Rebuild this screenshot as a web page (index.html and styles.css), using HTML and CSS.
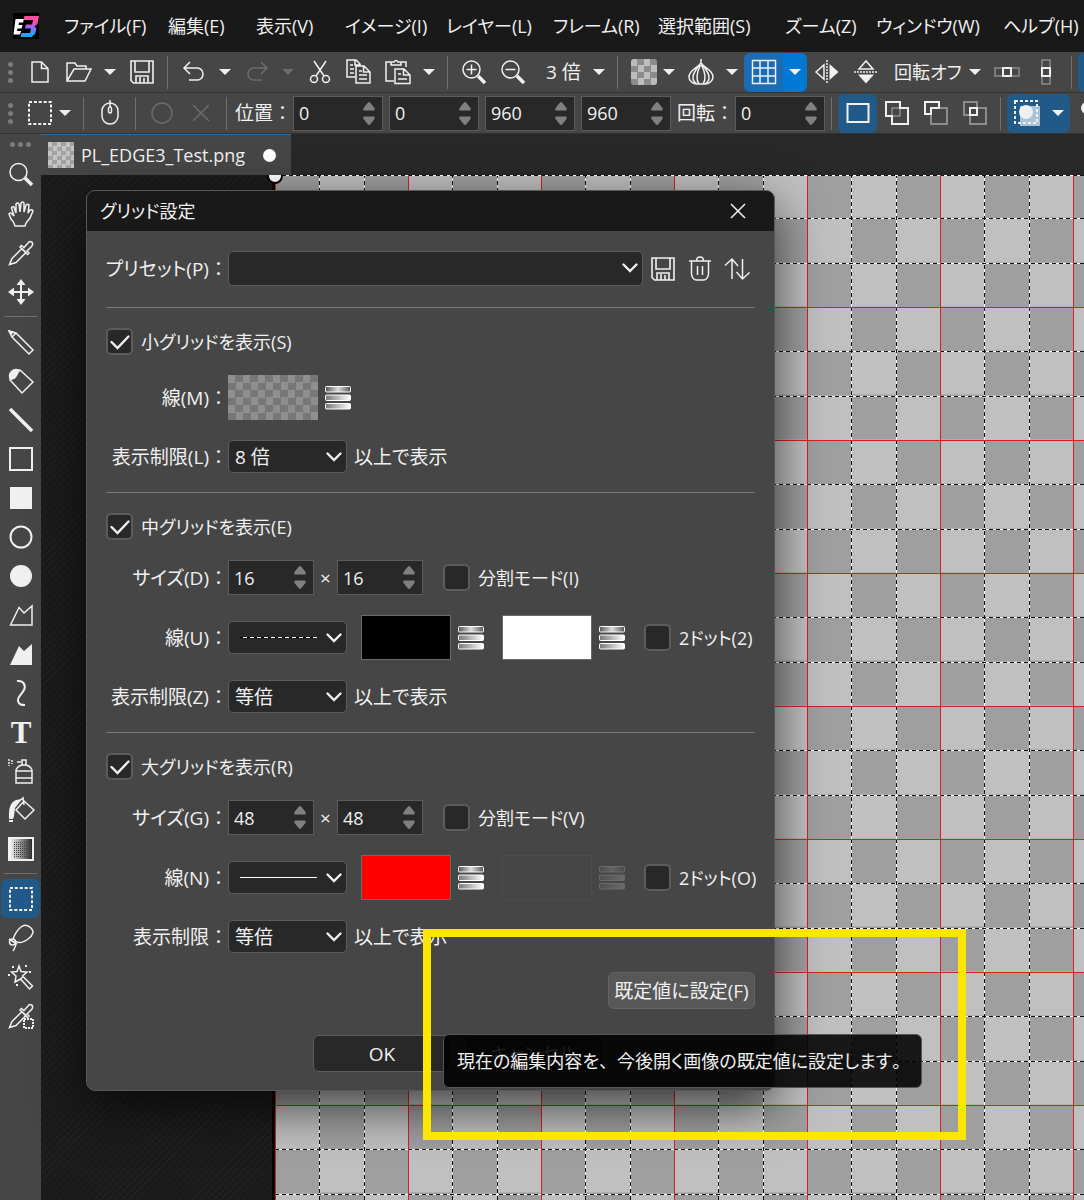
FILE: index.html
```html
<!DOCTYPE html>
<html lang="ja">
<head>
<meta charset="utf-8">
<meta name="viewport" content="width=device-width, initial-scale=1">
<title>PL_EDGE3_Test.png</title>
<link rel="stylesheet" href="styles.css">
</head>
<body>
<svg class="defs" width="0" height="0" aria-hidden="true">
  <defs>
    <linearGradient id="bar" x1="0" x2="1"><stop offset="0" stop-color="#777"/><stop offset="1" stop-color="#fff"/></linearGradient>
    <linearGradient id="barMid" x1="0" x2="1"><stop offset="0" stop-color="#555"/><stop offset=".5" stop-color="#ddd"/><stop offset="1" stop-color="#555"/></linearGradient>
    <linearGradient id="logo3" x1="0" y1="0" x2="0" y2="1"><stop offset=".2" stop-color="#ff4fa0"/><stop offset=".5" stop-color="#b45cf0"/><stop offset=".85" stop-color="#18a8f8"/></linearGradient>
    <linearGradient id="fade" x1="0" x2="1"><stop offset="0" stop-color="#fff"/><stop offset="1" stop-color="#222"/></linearGradient>
    <pattern id="dots" width="2" height="2" patternUnits="userSpaceOnUse"><rect width="1" height="1" fill="#444"/></pattern>
    <symbol id="i-arrow" viewBox="0 0 12 8"><path d="M0 1h12L6 7z" fill="currentColor"/></symbol>
    <symbol id="i-chev" viewBox="0 0 16 10"><path d="M1.500 1.500l6.500 6.500 6.500-6.500" fill="none" stroke="currentColor" stroke-width="2.400" stroke-linecap="round"/></symbol>
    <symbol id="i-up" viewBox="0 0 12 9"><path d="M5 .5Q6-.4 7 .5L11.500 6q.8 2.500-1 2.500H1.500Q-.3 8.500.5 6z" fill="currentColor"/></symbol>
    <symbol id="i-down" viewBox="0 0 12 9"><path d="M5 8.500Q6 9.400 7 8.500L11.500 3q.8-2.500-1-2.500H1.500Q-.3.5.5 3z" fill="currentColor"/></symbol>
    <symbol id="i-save" viewBox="0 0 26 26"><path d="M2 2h22v22H4.500L2 21.500zM6 2v11h14V2M7 24v-7h12v7M11 18v6M15 19v5" fill="none" stroke="currentColor" stroke-width="1.600"/></symbol>
    <symbol id="i-bars" viewBox="0 0 26 24"><g stroke="#fff"><rect x=".5" y=".5" width="25" height="5.500" rx="1" fill="url(#barMid)"/><rect x=".5" y="9" width="25" height="5.500" rx="1" fill="url(#bar)"/><rect x=".5" y="17.500" width="25" height="5.500" rx="1" fill="url(#bar)"/></g></symbol>
    <symbol id="i-marquee" viewBox="0 0 26 26"><path d="M2 2h22v22H2z" fill="none" stroke="currentColor" stroke-width="2" stroke-dasharray="3 1.890"/></symbol>
    <symbol id="i-check" viewBox="0 0 27 27"><path d="M5.500 14l6 6L22.500 8.500" fill="none" stroke="currentColor" stroke-width="2.400" stroke-linecap="round"/></symbol>
    <symbol id="i-drop" viewBox="0 0 26 26"><path d="M1.500 24.500l2.500-6L14 8.500l4 4-10 10zM12 7l7.500 7.500 1.500-1.500-2-2 5-5q1.500-3-.5-4t-3 .5l-4.500 5-2.500-2z" fill="none" stroke="currentColor" stroke-width="1.500"/></symbol>
  </defs>
</svg>

<header class="menubar">
  <svg class="logo" viewBox="0 0 26 26" role="img" aria-label="EDGE3"><rect width="26" height="26" fill="#000"/><path d="M2.500 6H11l-1 3.500H6L5.500 12h4l-1 3.500h-4L4 18h4l-1 3.500H.5z" fill="#fff"/><path d="M11.500 3H26l-1.500 8-3 2.500 2 2L22 21l-3.500 3H7.500l1-4h8.500l1-4.500h-6l1-4h6l1-4.500H10.500z" fill="url(#logo3)"/></svg>
  <nav class="menus">
    <button>ファイル(F)</button><button>編集(E)</button><button>表示(V)</button><button>イメージ(I)</button><button>レイヤー(L)</button><button>フレーム(R)</button><button>選択範囲(S)</button><button>ズーム(Z)</button><button>ウィンドウ(W)</button><button>ヘルプ(H)</button>
  </nav>
</header>

<div class="toolbar" role="toolbar">
  <span class="grip"><i></i><i></i><i></i></span>
  <button class="tool" aria-label="新規"><svg viewBox="0 0 26 26"><path d="M5 3h9.500l6.500 6.500V23H5zM14.500 3v6.500H21"/></svg></button>
  <button class="tool" aria-label="開く"><svg viewBox="0 0 26 26"><path d="M1 22V4h8l2 3h9v3M1 22l7-12h17l-6 12z"/></svg></button>
  <button class="drop" aria-label="履歴"><svg><use href="#i-arrow"/></svg></button>
  <button class="tool" aria-label="保存"><svg><use href="#i-save"/></svg></button>
  <span class="sep"></span>
  <button class="tool" aria-label="元に戻す"><svg viewBox="0 0 26 26"><path d="M9 3L3 9l6 6M3 9h13.500a5.500 6 0 0 1 0 12H8"/></svg></button>
  <button class="drop" aria-label="元に戻す一覧"><svg><use href="#i-arrow"/></svg></button>
  <button class="tool" aria-label="やり直し" disabled><svg viewBox="0 0 26 26"><path d="M17 3l6 6-6 6M23 9H9.500a5.500 6 0 0 0 0 12H18"/></svg></button>
  <button class="drop" aria-label="やり直し一覧" disabled><svg><use href="#i-arrow"/></svg></button>
  <button class="tool" aria-label="切り取り"><svg viewBox="0 0 26 26"><path d="M7 2l10 15M19 2L9 17"/><circle cx="7" cy="20" r="3.500"/><circle cx="19" cy="20" r="3.500"/></svg></button>
  <button class="tool" aria-label="コピー"><svg viewBox="0 0 26 26"><path d="M10 18H1V1h9l4 4v2M9 1v5h5M10 7h8l6 6v11H10zM17.500 7v6H24M4 6h3M4 10h4M4 14h4M13 12h3M13 16h8M13 20h8"/></svg></button>
  <button class="tool" aria-label="貼り付け"><svg viewBox="0 0 26 26"><path d="M9 22H1V3h6M15 3h6v5M6 6V3h3q2-3 4 0h3v3zM10 10h9l6 6v8.500H10zM18.500 10v6H25M13 15h3M13 20h9"/></svg></button>
  <button class="drop" aria-label="貼り付け方法"><svg><use href="#i-arrow"/></svg></button>
  <span class="sep"></span>
  <button class="tool" aria-label="拡大"><svg viewBox="0 0 26 26"><circle cx="10.500" cy="10.500" r="8.500"/><path d="M5.500 10.500h10M10.500 5.500v10"/><path class="thick" d="M17 17l7 7"/></svg></button>
  <button class="tool" aria-label="縮小"><svg viewBox="0 0 26 26"><circle cx="10.500" cy="10.500" r="8.500"/><path d="M5.500 10.500h10"/><path class="thick" d="M17 17l7 7"/></svg></button>
  <button class="textdrop zoomdrop"><span>3 倍</span><svg><use href="#i-arrow"/></svg></button>
  <span class="sep"></span>
  <button class="tool" aria-label="背景"><span class="checker"></span></button>
  <button class="drop slim" aria-label="背景の種類"><svg><use href="#i-arrow"/></svg></button>
  <button class="tool" aria-label="オニオンスキン"><svg viewBox="0 0 26 26"><path d="M13 0v5M13 4C10 9 1 11 1 18c0 4 4 7 8 7h8c4 0 8-3 8-7 0-7-9-9-12-14zM12 5C8 11 5 14 5 18c0 3 2 6 4 7M14 5c4 6 7 9 7 13 0 3-2 6-4 7M12.500 6c-4 8-5 14-1.500 19M13.500 6c4 8 5 14 1.500 19"/></svg></button>
  <button class="drop" aria-label="オニオンスキン設定"><svg><use href="#i-arrow"/></svg></button>
  <span class="split bright">
    <button class="tool" aria-label="グリッド"><svg viewBox="0 0 26 26"><path d="M1.500 1.500h23v23h-23zM9 1.500v23M17 1.500v23M1.500 9h23M1.500 17h23"/></svg></button>
    <button class="drop" aria-label="グリッド設定"><svg><use href="#i-arrow"/></svg></button>
  </span>
  <button class="tool" aria-label="左右反転"><svg viewBox="0 0 26 26"><path d="M10 6v14l-8-7z"/><path class="dash" d="M13 1v24"/><path class="fill" d="M15.500 5v16l9-8z"/></svg></button>
  <button class="tool" aria-label="上下反転"><svg viewBox="0 0 26 26"><path d="M6 10h14l-7-8z"/><path class="dash" d="M1 13h24"/><path class="fill" d="M5 15.500h16l-8 9z"/></svg></button>
  <button class="textdrop rotdrop"><span>回転オフ</span><svg><use href="#i-arrow"/></svg></button>
  <button class="tool" aria-label="横に並べる"><svg viewBox="0 0 26 26"><path class="dim" d="M1 9h24v8H1z"/><path class="bold" d="M9 9h8v8H9z"/></svg></button>
  <button class="tool" aria-label="縦に並べる"><svg viewBox="0 0 26 26"><path class="dim" d="M9 1h8v24H9z"/><path class="bold" d="M9 9h8v8H9z"/></svg></button>
  <span class="sep"></span>
  <span class="split"><button class="tool" aria-label="表示切替"></button></span>
</div>

<div class="toolbar" role="toolbar">
  <span class="grip"><i></i><i></i><i></i></span>
  <button class="tool" aria-label="選択範囲"><svg><use href="#i-marquee"/></svg></button>
  <button class="drop slim" aria-label="選択ツール一覧"><svg><use href="#i-arrow"/></svg></button>
  <span class="sep"></span>
  <button class="tool" aria-label="マウス操作"><svg viewBox="0 0 26 26"><rect x="5" y="3" width="16" height="21" rx="8"/><path d="M13 0v7"/><rect x="11.500" y="7" width="3" height="6" rx="1.500"/></svg></button>
  <span class="sep"></span>
  <button class="tool" aria-label="確定" disabled><svg viewBox="0 0 26 26"><circle cx="13" cy="13" r="10"/></svg></button>
  <button class="tool" aria-label="取消" disabled><svg viewBox="0 0 26 26"><path d="M5 5l16 16M21 5L5 21"/></svg></button>
  <span class="sep"></span>
  <label class="field-name" for="px">位置<span class="full">：</span></label>
  <span class="spin"><input id="px" value="0"><span class="steps"><svg><use href="#i-up"/></svg><svg><use href="#i-down"/></svg></span></span>
  <span class="spin"><input aria-label="位置 Y" value="0"><span class="steps"><svg><use href="#i-up"/></svg><svg><use href="#i-down"/></svg></span></span>
  <span class="spin"><input aria-label="幅" value="960"><span class="steps"><svg><use href="#i-up"/></svg><svg><use href="#i-down"/></svg></span></span>
  <span class="spin"><input aria-label="高さ" value="960"><span class="steps"><svg><use href="#i-up"/></svg><svg><use href="#i-down"/></svg></span></span>
  <label class="field-name" for="rot">回転<span class="full">：</span></label>
  <span class="spin"><input id="rot" value="0"><span class="steps"><svg><use href="#i-up"/></svg><svg><use href="#i-down"/></svg></span></span>
  <span class="sep"></span>
  <span class="split"><button class="tool" aria-label="新規選択"><svg viewBox="0 0 26 26"><path class="bold" d="M2.500 4h21v18h-21z"/></svg></button></span>
  <button class="tool" aria-label="追加"><svg viewBox="0 0 26 26"><path class="dim" d="M8 16V8h8v8z"/><path class="bold" d="M2 2h14v6h8v16H8v-8H2z"/></svg></button>
  <button class="tool" aria-label="削除"><svg viewBox="0 0 26 26"><path class="dim bold" d="M8 8h16v16H8z"/><path class="bold" d="M2 2h14v6H8v6H2z"/></svg></button>
  <button class="tool" aria-label="共通"><svg viewBox="0 0 26 26"><path class="dim bold" d="M2 2h13v13H2zM8 8h16v16H8z"/><path class="bold" d="M8 8h7v7H8z"/></svg></button>
  <span class="sep"></span>
  <span class="split">
    <button class="tool" aria-label="透過"><svg viewBox="0 0 26 26"><path class="mist" d="M6 6h20v20H6z"/><path class="bold dashes" d="M1 1h22v22H1z"/><circle class="fill" cx="12" cy="12" r="7"/></svg></button>
    <button class="drop" aria-label="透過設定"><svg><use href="#i-arrow"/></svg></button>
  </span>
  <button class="tool" aria-label="色"><svg viewBox="0 0 26 26"><circle class="fill" cx="10" cy="8" r="6"/></svg></button>
</div>

<div class="main">
  <aside class="tools" role="toolbar">
    <span class="grip-h"><i></i><i></i><i></i></span>
    <button aria-label="ズーム"><svg viewBox="0 0 26 26"><circle cx="10.500" cy="10" r="8.500"/><path class="thick" d="M17 16l7 7"/></svg></button>
    <button aria-label="手のひら"><svg viewBox="0 0 26 26"><path d="M7 25q-1-4-4-7L1 13q1-2 3 0l2 2-2.500-8q.5-2 2.500-1l2 6V3q1.500-2 3 0l1 8 1-9q1.500-2 3 0v9l2-7q2-1.500 3 0l-1 8 2-3q2-1 3 1l-3 7-4 5-1 3z"/></svg></button>
    <button aria-label="スポイト"><svg><use href="#i-drop"/></svg></button>
    <button aria-label="移動"><svg viewBox="0 0 26 26"><path class="bold" d="M13 3v20M3 13h20"/><path class="fill" d="M13 0l4.500 6h-9zM13 26l4.500-6h-9zM0 13l6-4.500v9zM26 13l-6-4.500v9z"/></svg></button>
    <hr>
    <button aria-label="ペン"><svg viewBox="0 0 26 26"><path d="M1 2l7 2 17 17-4 4L4 8zM8 4L4 8"/><path class="fill" d="M0 1l6 2-3 3z"/></svg></button>
    <button aria-label="消しゴム"><svg viewBox="0 0 26 26"><path d="M12 2l13 12-11 11L2 12z"/><path class="fill" d="M12 2Q7-1 3 3t-1 9q5 0 7-4t3-6z"/></svg></button>
    <button aria-label="直線"><svg viewBox="0 0 26 26"><path class="thick" d="M2 2l22 22"/></svg></button>
    <button aria-label="四角形"><svg viewBox="0 0 26 26"><path class="bold" d="M2 2h22v22H2z"/></svg></button>
    <button aria-label="塗り四角形"><svg viewBox="0 0 26 26"><path class="fill" d="M2 2h22v22H2z"/></svg></button>
    <button aria-label="円"><svg viewBox="0 0 26 26"><circle class="bold" cx="13" cy="13" r="10.500"/></svg></button>
    <button aria-label="塗り円"><svg viewBox="0 0 26 26"><circle class="fill" cx="13" cy="13" r="11"/></svg></button>
    <button aria-label="多角形"><svg viewBox="0 0 26 26"><path d="M2.500 23L11 5.500l5 5.500 8-7v19z"/></svg></button>
    <button aria-label="塗り多角形"><svg viewBox="0 0 26 26"><path class="fill" d="M2 24L11 5l5 5 8-7v21z"/></svg></button>
    <button aria-label="曲線"><svg viewBox="0 0 26 26"><path class="bold" d="M9 1c7-1 9 5 7 9s-7 7-6 11 4 4 7 4"/></svg></button>
    <button aria-label="文字"><svg viewBox="0 0 26 26"><text class="glyph" x="13" y="24">T</text></svg></button>
    <button aria-label="スプレー"><svg viewBox="0 0 26 26"><path d="M8 25V12q2-5 8-5t8 5v13zM14 7V2h4v5M8 13h16M11 13h10M8 20h16M9 4h4"/><path class="dash" d="M1 1v7M4 2v4"/></svg></button>
    <button aria-label="塗りつぶし"><svg viewBox="0 0 26 26"><path d="M16 4l10 9-9 9-9-9zM16 8l-1-7-5 4"/><path class="fill" d="M1 21Q0 6 8 3l6-1-7 9-1 8-1 3H1zM1 23h4v2H1z"/></svg></button>
    <button aria-label="グラデーション"><svg viewBox="0 0 26 26"><path d="M1 2h24v22H1z" fill="url(#fade)"/><path class="plain" d="M5 5h18v16H5z" fill="url(#dots)"/><path class="bold" d="M1 2h24v22H1z"/></svg></button>
    <hr>
    <button class="on" aria-label="範囲選択"><svg><use href="#i-marquee"/></svg></button>
    <button aria-label="投げ縄"><svg viewBox="0 0 26 26"><path d="M7 16q5 4 13-2t3-11-10-1T5 14"/><circle cx="4.500" cy="17" r="3"/><path d="M1 14l8 5M8 18q0 4-3 8"/></svg></button>
    <button aria-label="自動選択"><svg viewBox="0 0 26 26"><path d="M11 2l2 5.500 6 .5-4.500 4 10 10-3 3-9-10L7 18l1-6-4.500-4 5.500-.5zM12 15l3-2"/><path class="fill" d="M4 2h2v2H4zM17 1h2v2h-2zM21 7h2v2h-2zM0 10h2v2H0zM8 20h2v2H8z"/></svg></button>
    <button aria-label="色選択"><svg viewBox="0 0 26 26"><use href="#i-drop"/><path class="bold small-dash" d="M16 16h9v9h-9z"/></svg></button>
  </aside>

  <section class="workspace">
    <div class="tabs">
      <a class="tab" href="#canvas"><span class="thumb"></span><span>PL_EDGE3_Test.png</span><span class="unsaved"></span></a>
    </div>
    <div class="stage" id="canvas">
      <div class="sheet">
        <svg class="cells" aria-hidden="true">
          <defs>
            <pattern id="cells" y="-1" width="266" height="266" patternUnits="userSpaceOnUse">
              <rect width="266" height="266" fill="#c0c0c0"/>
              <g fill="none" stroke="#9f9f9f" stroke-width="45">
                <path d="M0 22h266M0 111h266M0 199h266" stroke-dasharray="44 45 44 44 45 44"/>
                <path d="M0 66h266M0 155h266M0 243h266" stroke-dasharray="0 44 45 44 44 45 44 0"/>
              </g>
              <path d="M44.500 0v266M89.500 0v266M177.500 0v266M222.500 0v266M0 44.500h266M0 89.500h266M0 177.500h266M0 222.500h266" fill="none" stroke="#fff"/>
              <path d="M44.500 0v266M89.500 0v266M177.500 0v266M222.500 0v266M0 44.500h266M0 89.500h266M0 177.500h266M0 222.500h266" fill="none" stroke="#111" stroke-dasharray="4 3"/>
            </pattern>
          </defs>
          <rect width="100%" height="100%" fill="url(#cells)"/>
          <path d="M.5 0v4000M0 .5h4000" stroke="#fff" fill="none"/>
          <path d="M.5 0v4000M0 .5h4000" stroke="#111" stroke-dasharray="4 3" fill="none"/>
        </svg>
        <div class="major"></div>
        <svg class="handle" viewBox="0 0 16 16" aria-hidden="true"><circle cx="8" cy="8" r="7" fill="#fff" stroke="#000" stroke-width="2"/></svg>
      </div>
    </div>
  </section>
</div>

<div class="dialog" role="dialog" aria-labelledby="dlg-title">
  <header class="dialog-head"><h1 id="dlg-title">グリッド設定</h1><button aria-label="閉じる"><svg viewBox="0 0 16 16"><path d="M1 1l14 14M15 1L1 15"/></svg></button></header>
  <form class="dialog-body">
    <div class="row preset">
      <label class="name" for="preset">プリセット(P)<span class="full">：</span></label>
      <span class="combo wide"><select id="preset"><option></option></select><svg><use href="#i-chev"/></svg></span>
      <span class="actions">
        <button type="button" aria-label="保存"><svg><use href="#i-save"/></svg></button>
        <button type="button" aria-label="削除"><svg viewBox="0 0 26 26"><path d="M2 5h22M4.500 5v13q1 6 5 6h7q4 0 5-6V5M9.500 5q0-4 3.500-4t3.500 4M10.500 10v9M15.500 10v9"/></svg></button>
        <button type="button" aria-label="並べ替え"><svg viewBox="0 0 26 26"><path d="M8 23V3M1 9.500L8 3l6 7M18.500 3v20M12.500 16l6 7 7-6.500"/></svg></button>
      </span>
    </div>

    <section class="group">
      <label class="check"><input type="checkbox" checked><svg><use href="#i-check"/></svg>小グリッドを表示(S)</label>
      <div class="row"><span class="name">線(M)<span class="full">：</span></span><button type="button" class="swatch trans" aria-label="線の色"></button><button type="button" class="bars" aria-label="色の一覧"><svg><use href="#i-bars"/></svg></button></div>
      <div class="row"><label class="name" for="lim1">表示制限(L)<span class="full">：</span></label><span class="combo"><select id="lim1"><option>8 倍</option></select><svg><use href="#i-chev"/></svg></span><span class="suffix">以上で表示</span></div>
    </section>

    <section class="group">
      <label class="check"><input type="checkbox" checked><svg><use href="#i-check"/></svg>中グリッドを表示(E)</label>
      <div class="row"><label class="name" for="w2">サイズ(D)<span class="full">：</span></label><span class="spin"><input id="w2" value="16"><span class="steps"><svg><use href="#i-up"/></svg><svg><use href="#i-down"/></svg></span></span><span class="times">×</span><span class="spin"><input aria-label="高さ" value="16"><span class="steps"><svg><use href="#i-up"/></svg><svg><use href="#i-down"/></svg></span></span><label class="check mode"><input type="checkbox"><svg><use href="#i-check"/></svg>分割モード(I)</label></div>
      <div class="row"><label class="name" for="line2">線(U)<span class="full">：</span></label><span class="combo line dashed"><select id="line2"><option></option></select><svg><use href="#i-chev"/></svg></span><button type="button" class="swatch black" aria-label="色 1"></button><button type="button" class="bars" aria-label="色 1 の一覧"><svg><use href="#i-bars"/></svg></button><button type="button" class="swatch white" aria-label="色 2"></button><button type="button" class="bars" aria-label="色 2 の一覧"><svg><use href="#i-bars"/></svg></button><label class="check two"><input type="checkbox"><svg><use href="#i-check"/></svg>2ドット(2)</label></div>
      <div class="row"><label class="name" for="lim2">表示制限(Z)<span class="full">：</span></label><span class="combo"><select id="lim2"><option>等倍</option></select><svg><use href="#i-chev"/></svg></span><span class="suffix">以上で表示</span></div>
    </section>

    <section class="group">
      <label class="check"><input type="checkbox" checked><svg><use href="#i-check"/></svg>大グリッドを表示(R)</label>
      <div class="row"><label class="name" for="w3">サイズ(G)<span class="full">：</span></label><span class="spin"><input id="w3" value="48"><span class="steps"><svg><use href="#i-up"/></svg><svg><use href="#i-down"/></svg></span></span><span class="times">×</span><span class="spin"><input aria-label="高さ" value="48"><span class="steps"><svg><use href="#i-up"/></svg><svg><use href="#i-down"/></svg></span></span><label class="check mode"><input type="checkbox"><svg><use href="#i-check"/></svg>分割モード(V)</label></div>
      <div class="row"><label class="name" for="line3">線(N)<span class="full">：</span></label><span class="combo line solid"><select id="line3"><option></option></select><svg><use href="#i-chev"/></svg></span><button type="button" class="swatch red" aria-label="色 1"></button><button type="button" class="bars" aria-label="色 1 の一覧"><svg><use href="#i-bars"/></svg></button><button type="button" class="swatch none" aria-label="色 2" disabled></button><button type="button" class="bars" aria-label="色 2 の一覧" disabled><svg><use href="#i-bars"/></svg></button><label class="check two"><input type="checkbox"><svg><use href="#i-check"/></svg>2ドット(O)</label></div>
      <div class="row"><label class="name" for="lim3">表示制限<span class="full">：</span></label><span class="combo"><select id="lim3"><option>等倍</option></select><svg><use href="#i-chev"/></svg></span><span class="suffix">以上で表示</span></div>
    </section>

    <div class="default-row"><button type="button" class="btn hover">既定値に設定(F)</button></div>
    <div class="footer"><button type="button" class="btn">OK</button><button type="button" class="btn">キャンセル</button></div>
  </form>
</div>

<div class="highlight"></div>
<div class="tooltip" role="tooltip">現在の編集内容を<span class="full">、</span>今後開く画像の既定値に設定します<span class="full">。</span></div>
</body>
</html>
```

FILE: styles.css
```css
* { box-sizing: border-box; }

body {
  margin: 0;
  height: 100vh;
  display: flex;
  flex-direction: column;
  overflow: hidden;
  position: relative;
  background: #282828;
  color: #f0f0f0;
  font: 19px/26px "Open Sans", "Noto Sans CJK JP", sans-serif;
  font-feature-settings: "palt";
  white-space: nowrap;
}

button, input, select {
  margin: 0;
  padding: 0;
  border: 0;
  background: none;
  color: inherit;
  font: inherit;
  font-feature-settings: inherit;
}

svg { display: block; flex: none; }
.defs { position: absolute; }
.full { font-feature-settings: "palt" 0; }

/* Icons */
.tool svg, .tools svg, .actions svg {
  width: 26px;
  height: 26px;
  fill: none;
  stroke: currentColor;
  stroke-width: 1.5;
  overflow: visible;
}
svg .bold { stroke-width: 2; }
svg .thick { stroke-width: 3.5; }
svg .fill { fill: currentColor; stroke: none; }
svg .dash { stroke-dasharray: 2 1; }
svg .dashes { stroke-dasharray: 3 2; }
svg .small-dash { stroke-dasharray: 2 1; }
svg .dim { stroke: #8c8c8c; }
svg .mist { fill: #a9c2d8; stroke: none; }
svg .plain { stroke: none; }
.glyph {
  font: bold 31px "Liberation Serif", serif;
  text-anchor: middle;
  fill: currentColor;
  stroke: none;
}

/* Menu bar */
.menubar {
  flex: none;
  display: flex;
  align-items: center;
  height: 52px;
  padding-left: 13px;
  background: #191919;
}
.logo { width: 26px; height: 26px; margin-right: 25px; }
.menus {
  display: grid;
  grid-template-columns: 104px 88px 89px 101px 107px 105px 127px 91px 127px auto;
  font-size: 18px;
}
.menus button { text-align: left; }

/* Tool bars */
.toolbar {
  flex: none;
  display: flex;
  align-items: center;
  height: 41px;
  background: #464646;
  border-bottom: 1px solid #333;
  overflow: hidden;
}
.toolbar > * { flex: none; }
.grip {
  width: 20px;
  display: flex;
  flex-direction: column;
  align-items: center;
  gap: 3px;
}
.grip i, .grip-h i {
  width: 5px;
  height: 5px;
  border-radius: 50%;
  background: #7c7c7c;
}
.tool, .drop {
  display: flex;
  align-items: center;
  justify-content: center;
  height: 39px;
}
.tool { width: 39px; }
.drop { width: 24px; }
.drop.slim { width: 18px; justify-content: flex-start; }
.drop svg, .textdrop svg { width: 12px; height: 8px; }
button:disabled { color: #6c6c6c; }
.sep { width: 13px; height: 33px; display: flex; justify-content: center; }
.sep::before { content: ""; width: 1px; background: #707070; }
.textdrop { display: flex; align-items: center; justify-content: space-between; }
.zoomdrop { width: 79px; padding: 0 6px 0 14px; }
.rotdrop { width: 102px; padding: 0 6px 0 9px; font-size: 18px; }
.split { display: flex; background: #215a88; border-radius: 6px; }
.split.bright { background: #1a6cb4; }
.split.bright .drop { background: #0078d4; border-radius: 0 6px 6px 0; }
.checker {
  width: 26px;
  height: 26px;
  border-radius: 3px;
  background: repeating-conic-gradient(#8c8c8c 0 25%, #bdbdbd 0 50%) 0 0 / 13px 13px;
}
.field-name { width: 60px; padding-left: 2px; }

/* Number fields */
.spin {
  display: flex;
  align-items: center;
  width: 90px;
  height: 35px;
  padding: 0 7px 0 5px;
  background: #282828;
  border: 1px solid #5c5c5c;
}
.toolbar .spin + .spin { margin-left: 6px; }
.toolbar .spin + .field-name { margin-left: 4px; }
.spin input { flex: 1; min-width: 0; width: 0; font-size: 18px; outline: none; }
.steps { display: flex; flex-direction: column; gap: 5px; color: #808080; }
.steps svg { width: 12px; height: 9px; }

/* Side tools */
.main { flex: 1; min-height: 0; display: flex; }
.tools {
  flex: none;
  width: 41px;
  display: flex;
  flex-direction: column;
  align-items: center;
  background: #464646;
}
.grip-h { display: flex; align-items: center; gap: 3px; height: 21px; }
.tools button {
  width: 39px;
  height: 39px;
  flex: none;
  display: flex;
  align-items: center;
  justify-content: center;
  border-radius: 6px;
}
.tools button.on { background: #215a88; }
.tools hr {
  width: 33px;
  height: 1px;
  margin: 5px 0;
  border: 0;
  background: #707070;
  flex: none;
}

/* Document area */
.workspace { flex: 1; min-width: 0; display: flex; flex-direction: column; }
.tabs { flex: none; display: flex; height: 41px; background: #282828; }
.tab {
  display: flex;
  align-items: center;
  width: 250px;
  padding: 0 15px 0 7px;
  background: #464646;
  border-top: 1px solid #2a6ea6;
  color: inherit;
  text-decoration: none;
  font-size: 18px;
}
.thumb {
  width: 26px;
  height: 26px;
  margin-right: 7px;
  background: repeating-conic-gradient(#a2a2a2 0 25%, #c4c4c4 0 50%) 0 0 / 9px 9px;
}
.unsaved {
  width: 13px;
  height: 13px;
  margin-left: auto;
  border-radius: 50%;
  background: #fff;
}
.stage {
  flex: 1;
  min-height: 0;
  display: flex;
  padding-left: 231px;
  overflow: hidden;
  background:
    repeating-linear-gradient(45deg, #2226 0 1px, #0000 1px 5px),
    repeating-linear-gradient(-45deg, #2a2a2a66 0 1px, #0000 1px 5px),
    #1a1a1a;
}
.sheet {
  flex: 1;
  min-width: 0;
  display: grid;
  position: relative;
  border-left: 3px solid #000;
}
.cells, .major { grid-area: 1 / 1; width: 100%; height: 100%; }
.major {
  background-image:
    linear-gradient(90deg, #0000 131px, #d8201c 131px 133px),
    linear-gradient(#0000 131px, #d8201c 131px 133px);
  background-size: 133px 133px;
  background-image:
    linear-gradient(90deg, #0000 132px, #d8201c 132px),
    linear-gradient(#0000 132px, #d8201c 132px);
  background-position: 1px 0;
}
.handle { position: absolute; left: -8px; top: -7px; width: 16px; height: 16px; }

/* Dialog */
.dialog {
  position: absolute;
  left: 86px;
  top: 190px;
  width: 689px;
  background: #464646;
  border: 1px solid #585858;
  border-radius: 9px;
  overflow: hidden;
  box-shadow: 0 16px 50px #000a;
}
.dialog-head {
  display: flex;
  align-items: center;
  justify-content: space-between;
  height: 40px;
  padding: 0 28px 0 13px;
  background: #191919;
}
.dialog-head h1 { margin: 0; font-size: 18px; font-weight: 400; }
.dialog-head svg { width: 16px; height: 16px; stroke: #f0f0f0; stroke-width: 1.5; fill: none; }
.dialog-body { padding: 20px 19px 18px; }
.row { display: flex; align-items: center; }
.name { width: 122px; display: flex; justify-content: flex-end; flex: none; }
.preset { margin-bottom: 21px; }
.group {
  display: flex;
  flex-direction: column;
  gap: 20px;
  padding: 20px 0 19px;
  border-top: 1px solid #7a7a7a;
}
.check { display: flex; align-items: center; height: 27px; position: relative; font-size: 18px; }
.check input {
  appearance: none;
  width: 27px;
  height: 27px;
  margin-right: 8px;
  flex: none;
  background: #282828;
  border: 2px solid #5c5c5c;
  border-radius: 5px;
}
.check svg { position: absolute; left: 0; top: 0; width: 27px; height: 27px; visibility: hidden; }
.check input:checked + svg { visibility: visible; }
.mode { margin-left: 20px; }
.two { margin-left: 19px; }

.combo { position: relative; width: 119px; height: 33px; flex: none; }
.combo select {
  appearance: none;
  width: 100%;
  height: 100%;
  padding-left: 6px;
  background: #282828;
  border: 1px solid #5c5c5c;
  border-radius: 5px;
  font-size: 19px;
}
.combo svg { position: absolute; right: 5px; top: 12px; width: 16px; height: 10px; pointer-events: none; }
.combo.wide { flex: 1; height: 35px; }
.line::before { content: ""; position: absolute; left: 12px; top: 16px; width: 77px; border-top: 1px solid #fff; }
.dashed::before { border-top: 0; height: 1px; background: repeating-linear-gradient(90deg, #000 0 3px, #fff 3px 7px); }
.suffix { margin-left: 7px; }
.actions { display: flex; gap: 11px; margin: 0 5px 0 7px; }

.group .spin { width: 86px; }
.times { width: 23px; text-align: center; }
.swatch { width: 90px; height: 45px; flex: none; border: 1px solid #6a6a6a; }
.combo + .swatch { margin-left: 14px; }
.bars + .swatch { margin-left: 18px; }
.trans { border: 0; background: repeating-conic-gradient(#777 0 25%, #8f8f8f 0 50%) 0 0 / 15px 15px; }
.black { background: #000; }
.white { background: #fff; }
.red { background: #f00; }
.none { border-color: #4c4c4c; }
.bars { margin-left: 7px; }
.bars svg { width: 26px; height: 24px; }
.bars:disabled { opacity: 0.2; }

.btn {
  height: 37px;
  background: #282828;
  border: 1px solid #5c5c5c;
  border-radius: 6px;
}
.btn.hover { background: #575757; border-color: #646464; width: 147px; }
.default-row { display: flex; justify-content: flex-end; }
.footer {
  display: grid;
  grid-template-columns: repeat(3, 138px);
  justify-content: end;
  gap: 14px;
  margin-top: 26px;
}

/* Overlays */
.highlight {
  position: absolute;
  left: 423px;
  top: 929px;
  width: 543px;
  height: 211px;
  border: 8px solid #ffe600;
}
.tooltip {
  position: absolute;
  left: 443px;
  top: 1034px;
  width: 479px;
  padding: 13px;
  background: #000000e0;
  border: 1px solid #555;
  border-radius: 6px;
  font-size: 18px;
}
```
